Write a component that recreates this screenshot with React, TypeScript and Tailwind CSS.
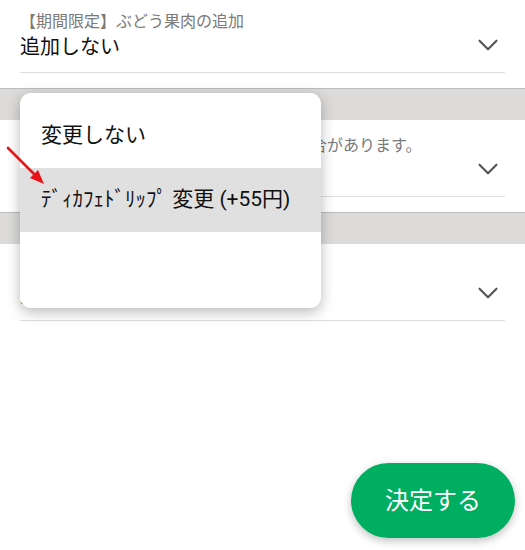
import { ChevronDown } from "lucide-react";

const font = { fontFamily: "Roboto, 'Noto Sans CJK JP', sans-serif" };

function Field({ label, value, first }: { label: string; value: string; first?: boolean }) {
  return (
    <div className={`bg-white px-5 pb-[15px] ${first ? "pt-[11px]" : "pt-[15px]"}`}>
      <div className="flex items-start border-b border-[#dedede] pb-[11px]">
        <div className="min-w-0 flex-1">
          <div className="truncate text-[16px] leading-[22px] text-[#7a7a7a]">{label}</div>
          <div className="text-[20px] leading-[28px] text-[#111]">{value}</div>
        </div>
        <ChevronDown className="-mb-[8px] mt-[17px] shrink-0 text-[#555]" size={34} strokeWidth={1.5} />
      </div>
    </div>
  );
}

function Band() {
  return <div className="h-[32px] border-t border-[#bcbcbc] bg-[#dcdbda]" />;
}

export default function App() {
  return (
    <div className="relative h-[550px] w-[525px] overflow-hidden bg-white" style={font}>
      <Field label="【期間限定】ぶどう果肉の追加" value="追加しない" first />
      <Band />
      <Field label="※ 店舗により、お取り扱いのできない場合があります。" value="変更しない" />
      <Band />
      <Field label="ホイップクリーム" value="変更しない" />

      {/* dropdown menu */}
      <div className="absolute left-[20px] top-[93px] h-[215px] w-[301px] overflow-hidden rounded-[11px] bg-white py-[11px] shadow-[0_4px_14px_rgba(0,0,0,0.28)]">
        <div className="flex h-[64px] items-center px-[21px] text-[21px] text-[#111]">変更しない</div>
        <div className="flex h-[64px] items-center bg-[#e0e0e0] px-[21px] text-[21px] text-[#111]">
          ﾃﾞｨｶﾌｪﾄﾞﾘｯﾌﾟ&nbsp;変更&nbsp;(+55円)
        </div>
      </div>

      {/* red arrow */}
      <svg className="absolute left-0 top-[140px]" width="60" height="50" viewBox="0 0 60 50">
        <line x1="8" y1="8" x2="37" y2="37" stroke="#e8141a" strokeWidth="2.6" strokeLinecap="round" />
        <polygon points="44,44 30,38 38,30" fill="#e8141a" />
      </svg>

      <button className="absolute left-[351px] top-[463px] flex h-[75px] w-[164px] items-center justify-center rounded-full bg-[#00ae62] text-[24px] text-white shadow-[0_3px_8px_rgba(0,0,0,0.25)]">
        決定する
      </button>
    </div>
  );
}
